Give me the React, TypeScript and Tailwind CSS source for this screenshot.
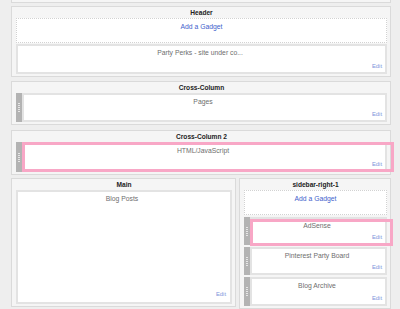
const font = { fontFamily: '"Liberation Sans", Arial, sans-serif' };

function Handle() {
  return (
    <div className="w-[6px] shrink-0 bg-[#b3b3b3] flex flex-col items-center justify-center gap-[1px]">
      <span className="w-[2px] h-[1px] bg-[#e6e6e6]" />
      <span className="w-[2px] h-[1px] bg-[#e6e6e6]" />
      <span className="w-[2px] h-[1px] bg-[#e6e6e6]" />
      <span className="w-[2px] h-[1px] bg-[#e6e6e6]" />
      <span className="w-[2px] h-[1px] bg-[#e6e6e6]" />
    </div>
  );
}

function Widget({
  title,
  h,
  handle = false,
  pink,
}: {
  title: string;
  h: string;
  handle?: boolean;
  pink?: string;
}) {
  return (
    <div className={`flex ${h}`}>
      {handle && <Handle />}
      <div className="relative flex-1 flex flex-col justify-between bg-white border-2 border-[#e3e3e3] pt-[3px] pb-[2px] pr-[3px]">
        <div className="text-center text-[6.8px] leading-[8px] text-[#6e6e6e]">{title}</div>
        <div className="text-right text-[5.8px] leading-[7px] text-[#7d93da]">Edit</div>
        {pink && <div className={`absolute border-[3px] border-[#f8a7c6] ${pink}`} />}
      </div>
    </div>
  );
}

function AddGadget({ h }: { h: string }) {
  return (
    <div className={`${h} bg-white border border-dotted border-[#d2d2d2] pt-[4px] text-center text-[6.8px] leading-[8px] text-[#3f5fcc]`}>
      Add a Gadget
    </div>
  );
}

function Section({
  title,
  className = "",
  children,
}: {
  title: string;
  className?: string;
  children: React.ReactNode;
}) {
  return (
    <div className={`border border-[#dadada] bg-[#f5f5f5] pl-[4px] pr-[3px] pb-[2px] ${className}`}>
      <div className="h-[11px] text-center text-[6.6px] leading-[12px] font-bold text-[#222]">{title}</div>
      {children}
    </div>
  );
}

export default function App() {
  return (
    <div style={font} className="w-[400px] h-[309px] overflow-hidden bg-[#eeeeee] pl-[11px]">
      <div className="w-[380px]">
        <div className="h-[3px] border-x border-b border-[#dadada] bg-[#f5f5f5]" />

        <Section title="Header" className="mt-[3px]">
          <div className="flex flex-col gap-[1px]">
            <AddGadget h="h-[25px]" />
            <Widget title="Party Perks - site under co..." h="h-[30px]" />
          </div>
        </Section>

        <Section title="Cross-Column" className="mt-[4px]">
          <Widget title="Pages" h="h-[29px]" handle />
        </Section>

        <Section title="Cross-Column 2" className="mt-[5px]">
          <Widget
            title="HTML/JavaScript"
            h="h-[30px]"
            handle
            pink="-left-[2px] -top-[2px] -bottom-[2px] -right-[9px]"
          />
        </Section>

        <div className="mt-[3px] flex items-start gap-[3px]">
          <Section title="Main" className="w-[225px]">
            <div className="h-[114px] bg-white border-2 border-[#e3e3e3] flex flex-col justify-between pt-[3px] pb-[4px] pr-[4px]">
              <div className="text-center text-[6.8px] leading-[8px] text-[#6e6e6e]">Blog Posts</div>
              <div className="text-right text-[5.8px] leading-[7px] text-[#7d93da]">Edit</div>
            </div>
          </Section>

          <Section title="sidebar-right-1" className="w-[152px] pl-[3px]">
            <div className="flex flex-col gap-[2px]">
              <AddGadget h="h-[25px]" />
              <Widget
                title="AdSense"
                h="h-[28px]"
                handle
                pink="-left-[2px] top-0 -bottom-[3px] -right-[8px]"
              />
              <Widget title="Pinterest Party Board" h="h-[28px]" handle />
              <Widget title="Blog Archive" h="h-[29px]" handle />
            </div>
          </Section>
        </div>
      </div>
    </div>
  );
}
